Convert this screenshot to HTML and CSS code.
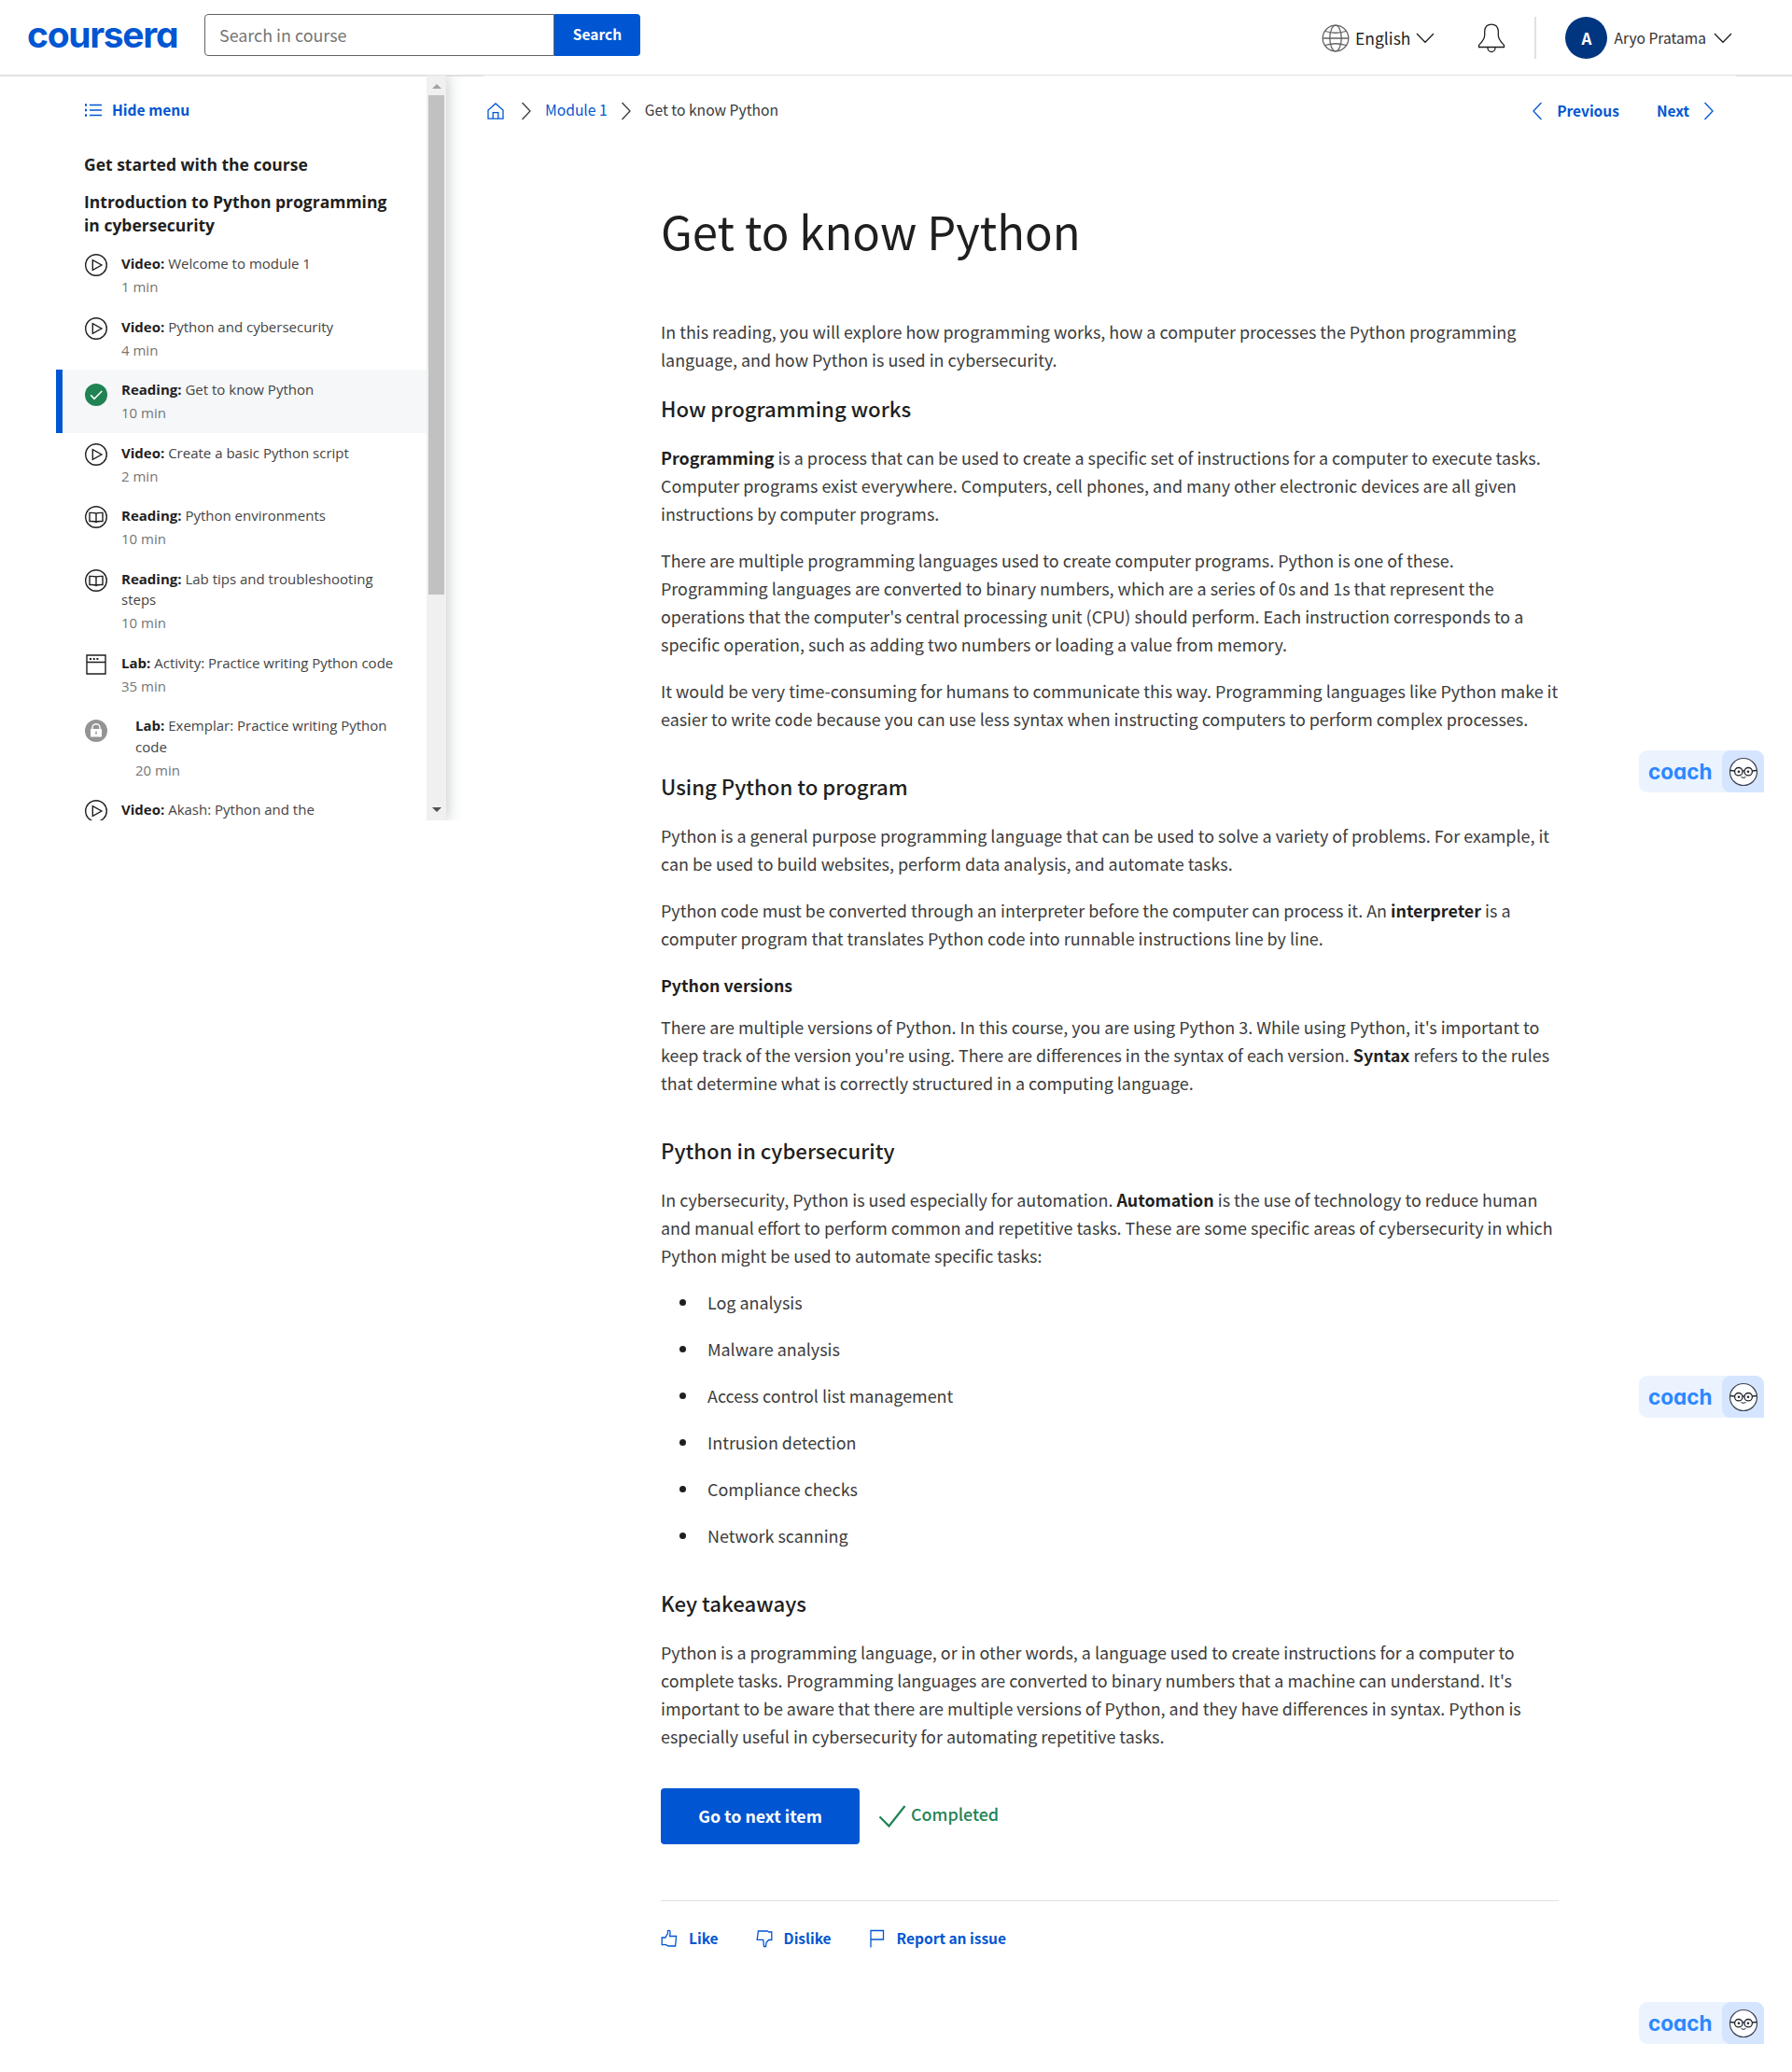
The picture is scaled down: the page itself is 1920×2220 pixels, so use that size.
FILE: index.html
```html
<!DOCTYPE html>
<html lang="en">
<head>
<meta charset="utf-8">
<title>Get to know Python | Coursera</title>
<link rel="stylesheet" href="styles.css">
</head>
<body>
<svg class="sprite" width="0" height="0" aria-hidden="true">
  <symbol id="play" viewBox="0 0 24 24"><circle cx="12" cy="12" r="11.3"/><path d="M8.3 6.6v10.8l9.6-5.4z"/></symbol>
  <symbol id="book" viewBox="0 0 24 24"><circle cx="12" cy="12" r="11.3"/><path d="M12 8.200C10.800 7.200 7.500 7.400 5 7.400V16.600C8 16.500 11 16.400 12 17.200C13 16.400 16 16.500 19 16.600V7.400C16.500 7.400 13.200 7.200 12 8.200zM12 8.200V18.300"/></symbol>
  <symbol id="window" viewBox="0 0 24 24"><path d="M2 2h20v20H2zM2 9.500h20"/><path d="M5 6h2M8.700 6h2M12.400 6h2" stroke-width="2"/></symbol>
  <symbol id="right" viewBox="0 0 12 20"><path d="M1.500 1l8.500 9-8.500 9"/></symbol>
  <symbol id="down" viewBox="0 0 20 12"><path d="M1 1l9 9.300L19 1"/></symbol>
  <symbol id="face" viewBox="0 0 32 32"><circle cx="16" cy="16" r="14.500" fill="#fff" stroke="#3c4254" stroke-width="1.200"/><g fill="none" stroke="#23262f" stroke-width="1.300"><circle cx="10.800" cy="15.700" r="4.200"/><circle cx="21.200" cy="15.700" r="4.200"/><path d="M2 14.500l4.700.5M15 14.900h2M25.300 15l4.700-.5"/><path d="M13.500 21.500q2.500 1.800 5 0" stroke-width="1"/></g><circle cx="11" cy="15.700" r="1.300" fill="#23262f" stroke="none"/><circle cx="21" cy="15.700" r="1.300" fill="#23262f" stroke="none"/></symbol>
</svg>

<header class="topbar">
  <a class="logo">coursera</a>
  <form class="search">
    <div class="search-field">Search in course</div>
    <div class="search-button">Search</div>
  </form>
  <div class="account">
    <div class="language">
      <svg class="globe" viewBox="0 0 30 30"><circle cx="15" cy="15" r="13.800"/><ellipse cx="15" cy="15" rx="6.200" ry="13.800"/><path d="M1.200 15h27.600M4 7.500q11 3.500 22 0M4 22.500q11-3.500 22 0"/></svg>
      <span>English</span>
      <svg class="down"><use href="#down"/></svg>
    </div>
    <svg class="bell" viewBox="0 0 30 32"><path d="M1.500 25.500h27V23.500C26 20.500 22.300 17.500 22.300 12.500V8Q21.500 1.200 15 1.200T7.700 8v4.500C7.700 17.500 4 20.500 1.500 23.500zM11 26v.5a4 4 0 0 0 8 0v-.5"/></svg>
    <div class="user">
      <span class="avatar">A</span>
      <span class="username">Aryo Pratama</span>
      <svg class="down"><use href="#down"/></svg>
    </div>
  </div>
</header>

<div class="layout">
  <aside class="sidebar">
    <nav class="outline">
      <a class="hide-menu">
        <svg class="list-icon" viewBox="0 0 20 14"><path d="M6 1.500h13M6 7h13M6 12.500h13"/><path d="M1 1.500h2M1 7h2M1 12.500h2" class="dots"/></svg>
        <span>Hide menu</span>
      </a>
      <h2>Get started with the course</h2>
      <h2 class="section-title">Introduction to Python programming in cybersecurity</h2>
      <ul class="items">
        <li><svg><use href="#play"/></svg><div><p><b>Video:</b> Welcome to module 1</p><small>1 min</small></div></li>
        <li><svg><use href="#play"/></svg><div><p><b>Video:</b> Python and cybersecurity</p><small>4 min</small></div></li>
        <li class="current"><svg class="status" viewBox="0 0 24 24"><circle cx="12" cy="12" r="12" fill="#1f8354" stroke="none"/><path d="M6.200 12.200l3.800 4.200 8.200-8.400" stroke="#fff" stroke-width="1.600"/></svg><div><p><b>Reading:</b> Get to know Python</p><small>10 min</small></div></li>
        <li><svg><use href="#play"/></svg><div><p><b>Video:</b> Create a basic Python script</p><small>2 min</small></div></li>
        <li><svg><use href="#book"/></svg><div><p><b>Reading:</b> Python environments</p><small>10 min</small></div></li>
        <li><svg><use href="#book"/></svg><div><p><b>Reading:</b> Lab tips and troubleshooting steps</p><small>10 min</small></div></li>
        <li><svg><use href="#window"/></svg><div><p><b>Lab:</b> Activity: Practice writing Python code</p><small>35 min</small></div></li>
        <li class="locked"><svg class="status" viewBox="0 0 24 24"><circle cx="12" cy="12" r="12" fill="#949494" stroke="none"/><path d="M8 10V8.500a4 3.800 0 0 1 8 0V10" stroke="#fff" stroke-width="1.400"/><path d="M6 10h12v8.500H6z" fill="#fff" stroke="none"/><path d="M12 12.500v3.200" stroke="#949494" stroke-width="1.400"/></svg><div><p><b>Lab:</b> Exemplar: Practice writing Python code</p><small>20 min</small></div></li>
        <li><svg><use href="#play"/></svg><div><p><b>Video:</b> Akash: Python and the</p></div></li>
      </ul>
    </nav>
    <div class="scrollbar"><i class="arrow-up"></i><i class="thumb"></i><i class="arrow-down"></i></div>
  </aside>

  <main class="content">
    <div class="breadcrumbs">
      <svg class="home" viewBox="0 0 18 18"><path d="M1 8v9.200h16V8L9 .9zM6.200 17v-6.300h5.600V17"/></svg>
      <svg class="right"><use href="#right"/></svg>
      <a>Module 1</a>
      <svg class="right"><use href="#right"/></svg>
      <span>Get to know Python</span>
      <div class="pager">
        <a class="prev"><svg class="right"><use href="#right"/></svg><span>Previous</span></a>
        <a class="next"><span>Next</span><svg class="right"><use href="#right"/></svg></a>
      </div>
    </div>

    <article class="reading">
      <h1>Get to know Python</h1>
      <p>In this reading, you will explore how programming works, how a computer processes the Python programming<br>language, and how Python is used in cybersecurity.</p>
      <h2 class="first">How programming works</h2>
      <p><b>Programming</b> is a process that can be used to create a specific set of instructions for a computer to execute tasks.<br>Computer programs exist everywhere. Computers, cell phones, and many other electronic devices are all given<br>instructions by computer programs.</p>
      <p>There are multiple programming languages used to create computer programs. Python is one of these.<br>Programming languages are converted to binary numbers, which are a series of 0s and 1s that represent the<br>operations that the computer's central processing unit (CPU) should perform. Each instruction corresponds to a<br>specific operation, such as adding two numbers or loading a value from memory.</p>
      <p>It would be very time-consuming for humans to communicate this way. Programming languages like Python make it<br>easier to write code because you can use less syntax when instructing computers to perform complex processes.</p>
      <h2>Using Python to program</h2>
      <p>Python is a general purpose programming language that can be used to solve a variety of problems. For example, it<br>can be used to build websites, perform data analysis, and automate tasks.</p>
      <p>Python code must be converted through an interpreter before the computer can process it. An <b>interpreter</b> is a<br>computer program that translates Python code into runnable instructions line by line.</p>
      <h3>Python versions</h3>
      <p>There are multiple versions of Python. In this course, you are using Python 3. While using Python, it's important to<br>keep track of the version you're using. There are differences in the syntax of each version. <b>Syntax</b> refers to the rules<br>that determine what is correctly structured in a computing language.</p>
      <h2>Python in cybersecurity</h2>
      <p>In cybersecurity, Python is used especially for automation. <b>Automation</b> is the use of technology to reduce human<br>and manual effort to perform common and repetitive tasks. These are some specific areas of cybersecurity in which<br>Python might be used to automate specific tasks:</p>
      <ul class="areas">
        <li>Log analysis</li>
        <li>Malware analysis</li>
        <li>Access control list management</li>
        <li>Intrusion detection</li>
        <li>Compliance checks</li>
        <li>Network scanning</li>
      </ul>
      <h2>Key takeaways</h2>
      <p>Python is a programming language, or in other words, a language used to create instructions for a computer to<br>complete tasks. Programming languages are converted to binary numbers that a machine can understand. It's<br>important to be aware that there are multiple versions of Python, and they have differences in syntax. Python is<br>especially useful in cybersecurity for automating repetitive tasks.</p>

      <div class="actions">
        <a class="next-item">Go to next item</a>
        <svg class="check" viewBox="0 0 30 26"><path d="M1.500 13.500L11.500 23.500 28.500 2"/></svg>
        <span class="completed">Completed</span>
      </div>
      <div class="feedback">
        <a><svg viewBox="0 0 18 20"><path d="M1.200 9h3.600L7.500 4.500V1.500q2.700-.8 2.600 2L9.600 7.500h7L15.600 18H8L5.500 16.700H1.200z"/></svg><span>Like</span></a>
        <a><svg viewBox="0 0 18 20"><path d="M2.400 2H12l2 1h2.800v8.500h-3.300L11 14.500l-.5 4H8.500l-.7-7.200H1.200z"/></svg><span>Dislike</span></a>
        <a><svg viewBox="0 0 18 20"><path d="M2 19.500V1.500h13.500v9.500H2"/></svg><span>Report an issue</span></a>
      </div>
    </article>
  </main>
</div>

<div class="coach coach-1"><span>coach</span><i><svg><use href="#face"/></svg></i></div>
<div class="coach coach-2"><span>coach</span><i><svg><use href="#face"/></svg></i></div>
<div class="coach coach-3"><span>coach</span><i><svg><use href="#face"/></svg></i></div>
</body>
</html>
```
FILE: styles.css
```css
* { box-sizing: border-box; margin: 0; padding: 0; }
body {
  position: relative;
  width: 1920px;
  height: 2220px;
  overflow: hidden;
  background: #fff;
  color: #1f1f1f;
  font-family: "Noto Sans CJK SC", "Source Sans Pro", sans-serif;
  font-size: 17.9px;
}
svg { flex: none; fill: none; stroke: currentColor; stroke-width: 1.3; overflow: visible; }
ul { list-style: none; }
.sprite { position: absolute; }
.right { width: 12px; height: 20px; }
.down { width: 20px; height: 12px; }

.topbar {
  display: flex;
  height: 81px;
  padding: 15px 64px 0 29px;
  border-bottom: 1px solid #e0e0e0;
}
.logo {
  width: 190px;
  height: 45px;
  line-height: 44px;
  color: #0056d2;
  font-family: Inter, sans-serif;
  font-weight: 700;
  font-size: 39px;
  letter-spacing: -1.300px;
  font-feature-settings: "cv11";
}
.search { display: flex; height: 45px; }
.search-field {
  width: 375px;
  padding-left: 15px;
  border: 1px solid #636363;
  border-radius: 4px 0 0 4px;
  line-height: 42px;
  color: #757575;
}
.search-button {
  width: 92px;
  border-radius: 0 4px 4px 0;
  background: #0056d2;
  color: #fff;
  font-weight: 700;
  font-size: 15.500px;
  line-height: 43px;
  text-align: center;
}
.account { display: flex; margin-left: auto; align-items: flex-start; }
.language { display: flex; align-items: center; height: 51px; font-size: 17.500px; }
.language span { padding-bottom: 1px; }
.globe { width: 30px; height: 30px; margin-right: 6px; stroke: #636363; }
.language .down { margin-left: 6px; }
.bell { width: 30px; height: 32px; margin: 10px 31px 0 46px; }
.user { display: flex; align-items: center; height: 45px; margin-top: 3px; padding-left: 31px; border-left: 2px solid #e1e1e1; }
.avatar { width: 45px; height: 45px; margin-right: 7px; border-radius: 50%; background: #003580; color: #fff; text-align: center; line-height: 45px; font-weight: 700; font-size: 17px; }
.username { padding-bottom: 2px; font-size: 15.600px; color: #333; }
.user .down { margin-left: 8px; }

.layout {
  display: flex;
  background:
    linear-gradient(#e4e4e4, #e4e4e4) 0 0 / 518px 1px no-repeat,
    linear-gradient(#e4e4e4, #e4e4e4) 1860px 0 / 60px 1px no-repeat;
}
.sidebar {
  display: flex;
  width: 418px;
  height: 798px;
  margin-left: 60px;
  clip-path: inset(0 -20px 0 0);
  box-shadow: 2px 0 14px rgba(60, 80, 80, .28);
  font-family: "Open Sans", sans-serif;
}
.outline { width: 397px; overflow: hidden; }
.hide-menu { display: flex; align-items: center; height: 74px; padding-left: 30px; gap: 10px; color: #0056d2; font: 700 15.600px "Noto Sans CJK SC", sans-serif; }
.hide-menu span { padding-bottom: 2px; }
.list-icon { width: 20px; height: 14px; }
.dots { stroke-width: 2.500; }
.outline h2 { width: 365px; padding-left: 30px; font-size: 17.500px; font-weight: 700; line-height: 25px; margin-top: 9px; }
.outline .section-title { margin-top: 15px; }
.items { margin-top: 7px; }
.items li { display: flex; padding: 10px 29px 10px 30px; font-size: 15px; line-height: 22.500px; color: #444; }
.items svg { width: 24px; height: 24px; margin: 1px 15.500px 0 .5px; stroke: #1f1f1f; stroke-width: 1.400; }
.items .status { margin-top: 5px; }
.items b { font-weight: 700; color: #1f1f1f; }
.items small { display: block; padding-top: 2.500px; font-size: 15px; color: #757575; }
.items .current { padding-left: 23px; border-left: 7px solid #0056d2; background: #f5f7f8; }
.items .locked div { padding-left: 15px; }
.items .locked { padding-right: 20px; }
.scrollbar { display: flex; flex-direction: column; align-items: center; width: 21px; background: #f0f0f0; }
.arrow-up { margin-top: 9px; border: 5px solid transparent; border-top: 0; border-bottom-color: #a3a3a3; }
.thumb { width: 17px; height: 535px; margin-top: 7px; background: #c1c1c1; }
.arrow-down { margin: auto 0 9px; border: 5px solid transparent; border-bottom: 0; border-top-color: #505050; }

.content { flex: 1; }
.breadcrumbs { display: flex; align-items: center; height: 75px; padding-left: 44px; font-size: 15.650px; color: #3a3a3a; }
.breadcrumbs a, .home { color: #0056d2; }
.breadcrumbs > a, .breadcrumbs span { padding-bottom: 2px; }
.home { width: 18px; height: 18px; margin-right: 18px; margin-top: 1px; }
.breadcrumbs > .right { margin-right: 14px; }
.breadcrumbs > a { margin-right: 14px; }
.pager { display: flex; gap: 40px; margin-left: auto; padding-right: 83px; font-weight: 700; font-size: 15.500px; }
.pager a { display: flex; align-items: center; gap: 15px; }
.prev svg { transform: scaleX(-1); }

.reading { width: 962px; margin: 61px 0 0 230px; line-height: 30px; white-space: nowrap; }
.reading h1 { margin-bottom: 63px; font-size: 49.050px; font-weight: 400; line-height: 60px; }
.reading h2 { margin: 42px 0 23px; font-size: 22.200px; font-weight: 500; line-height: 30px; }
.reading .first { margin-top: 22px; }
.reading h3 { margin: 20px 0 15px; font-size: 17.800px; font-weight: 700; }
.reading p, .areas { color: #3c3c3c; font-size: 17.910px; }
.reading b { color: #1f1f1f; }
.reading p + p { margin-top: 20px; }
.areas { margin-top: 20px; }
.areas li { display: flex; align-items: center; height: 30px; padding-left: 20px; margin-bottom: 20px; }
.areas li::before { content: ""; width: 7px; height: 7px; margin-right: 23px; border-radius: 50%; background: #1f1f1f; }
.actions { display: flex; height: 60px; margin-top: 41px; }
.next-item { width: 213px; border-radius: 4px; background: #0056d2; color: #fff; text-align: center; font-weight: 700; font-size: 17.800px; line-height: 58px; }
.check { width: 30px; height: 26px; margin: 17px 5px 0 20px; color: #1f8354; stroke-width: 2.200; }
.completed { color: #1f8354; font-weight: 500; line-height: 55px; }
.feedback { display: flex; gap: 40px; margin-top: 60px; padding-top: 26px; border-top: 1px solid #e1e1e1; color: #0056d2; font-weight: 700; font-size: 15.500px; }
.feedback a { display: flex; align-items: center; gap: 12px; }
.feedback span { margin-top: -2px; }
.feedback svg { width: 18px; height: 20px; }

.coach { position: absolute; left: 1756px; display: flex; width: 134px; height: 45px; border-radius: 9px 9px 0 9px; background: #ebf3ff; }
.coach span { width: 89px; padding-left: 10px; color: #2d87ff; font: 700 22.500px/46px Inter, sans-serif; font-feature-settings: "cv11"; }
.coach i { display: flex; width: 45px; align-items: center; justify-content: center; border-radius: 9px 9px 0 9px; background: #d5e5ff; }
.coach svg { width: 32px; height: 32px; }
.coach-1 { top: 804px; }
.coach-2 { top: 1474px; }
.coach-3 { top: 2145px; }
```
